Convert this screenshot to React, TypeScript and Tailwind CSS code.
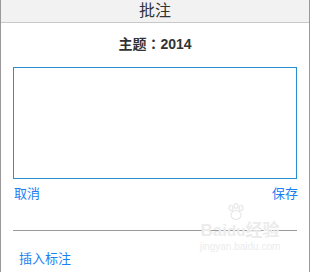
import React from 'react';

export default function App() {
    const font = { fontFamily: '"Liberation Sans", "Noto Sans CJK SC", sans-serif' };

    return (
        <div className="relative w-[310px] h-[272px] bg-white border-l border-r border-[#999]" style={font}>
            <div className="h-[23px] bg-[#f2f2f2] border-b border-[#c8c8c8] text-center text-[16px] leading-[22px] text-[#333]">批注</div>

            <div className="mt-[10px] text-center text-[14px] leading-[20px] font-bold text-[#333]">
                主题<span className="font-['Noto_Sans_CJK_TC',sans-serif]">：</span>2014
            </div>

            <div className="mt-[13px] ml-[12px] w-[284px] h-[112px] border border-[#2990cf]"></div>

            <div className="mt-[6px] ml-[13px] w-[284px] flex justify-between text-[13px] leading-[18px] text-[#1b80f2]">
                <span>取消</span>
                <span>保存</span>
            </div>

            <div className="mt-[27px] ml-[12px] w-[284px] h-px bg-[#999]"></div>

            <div className="mt-[19px] ml-[18px] text-[13px] leading-[18px] text-[#1b80f2]">插入标注</div>

            {/* watermark */}
            <div className="absolute left-[194px] top-[203px] w-[90px] flex flex-col items-center text-[#ececec] pointer-events-none select-none">
                <svg width="20" height="18" viewBox="0 0 20 18" className="ml-[-8px]">
                    <g fill="none" stroke="#e8e8e8" strokeWidth="1.2">
                        <ellipse cx="5" cy="5" rx="2" ry="2.6" />
                        <ellipse cx="10" cy="3" rx="2" ry="2.4" />
                        <ellipse cx="15" cy="5" rx="2" ry="2.6" />
                        <ellipse cx="10" cy="12" rx="5" ry="4.5" />
                    </g>
                </svg>
                <div className="text-[17px] leading-[20px] font-bold">Bai<span className="text-[15px]">du</span>经验</div>
                <div className="text-[10px] leading-[12px]">jingyan.baidu.com</div>
            </div>
        </div>
    );
}
